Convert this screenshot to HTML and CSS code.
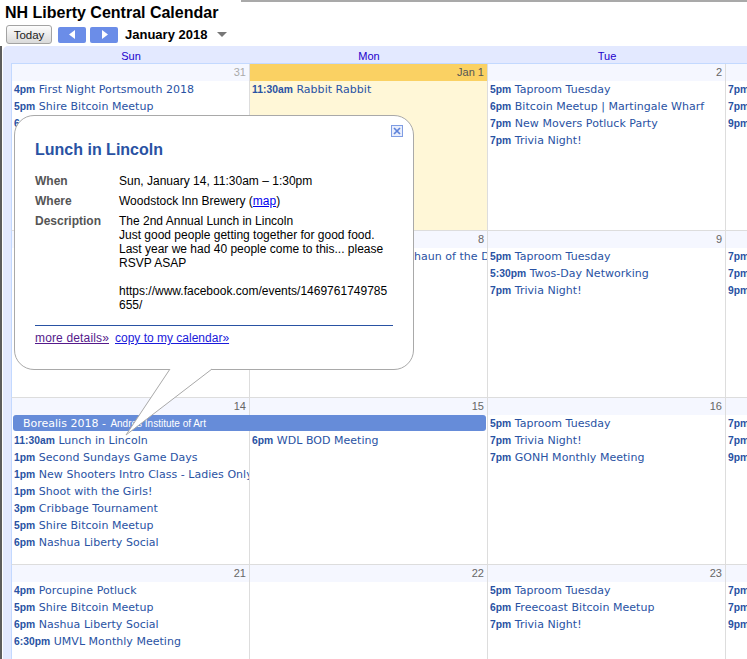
FILE: index.html
```html
<!DOCTYPE html>
<html>
<head>
<meta charset="utf-8">
<title>NH Liberty Central Calendar</title>
<link rel="stylesheet" href="styles.css">
</head>
<body>
<div class="page">
  <header class="titlebar">
    <h1 class="title">NH Liberty Central Calendar</h1>
    <div class="topline"></div>
  </header>
  <div class="toolbar">
    <button class="btn-today">Today</button>
    <button class="btn-nav"><svg width="7" height="9" viewBox="0 0 7 9"><path d="M6 0L0 4.5L6 9Z" fill="#fff"/></svg></button>
    <button class="btn-nav btn-next"><svg width="7" height="9" viewBox="0 0 7 9"><path d="M1 0L7 4.5L1 9Z" fill="#fff"/></svg></button>
    <span class="month">January 2018</span>
    <svg class="dropdown" width="10" height="5" viewBox="0 0 10 5"><path d="M0 0H10L5 5Z" fill="#777"/></svg>
  </div>

  <div class="calwrap">
    <div class="cal">
      <div class="dayhead">
        <div>Sun</div><div>Mon</div><div>Tue</div><div>Wed</div>
      </div>

      <!-- Week 1 -->
      <div class="week">
        <div class="num c1 other">31</div>
        <div class="num c2 today">Jan 1</div>
        <div class="num c3">2</div>
        <div class="num c4">3</div>
        <div class="cell c1">
          <div class="ev"><b>4pm</b> First Night Portsmouth 2018</div>
          <div class="ev"><b>5pm</b> Shire Bitcoin Meetup</div>
          <div class="ev"><b>6pm</b> Nashua Liberty Social</div>
        </div>
        <div class="cell c2 today">
          <div class="ev"><b>11:30am</b> Rabbit Rabbit</div>
        </div>
        <div class="cell c3">
          <div class="ev"><b>5pm</b> Taproom Tuesday</div>
          <div class="ev"><b>6pm</b> Bitcoin Meetup | Martingale Wharf</div>
          <div class="ev"><b>7pm</b> New Movers Potluck Party</div>
          <div class="ev"><b>7pm</b> Trivia Night!</div>
        </div>
        <div class="cell c4">
          <div class="ev"><b>7pm</b> Manchester Liberty Forum</div>
          <div class="ev"><b>7pm</b> Free State Meetup</div>
          <div class="ev"><b>9pm</b> Late Night Liberty Chat</div>
        </div>
      </div>

      <!-- Week 2 -->
      <div class="week">
        <div class="num c1">7</div>
        <div class="num c2">8</div>
        <div class="num c3">9</div>
        <div class="num c4">10</div>
        <div class="cell c1">
          <div class="ev"><b>1pm</b> Porcupine Brunch</div>
          <div class="ev"><b>5pm</b> Shire Bitcoin Meetup</div>
          <div class="ev"><b>6pm</b> Nashua Liberty Social</div>
        </div>
        <div class="cell c2">
          <div class="ev"><b>6:30pm</b> Liberty Movie Night: Shaun of the Dead</div>
        </div>
        <div class="cell c3">
          <div class="ev"><b>5pm</b> Taproom Tuesday</div>
          <div class="ev"><b>5:30pm</b> Twos-Day Networking</div>
          <div class="ev"><b>7pm</b> Trivia Night!</div>
        </div>
        <div class="cell c4">
          <div class="ev"><b>7pm</b> Manchester Liberty Forum</div>
          <div class="ev"><b>7pm</b> Free State Meetup</div>
          <div class="ev"><b>9pm</b> Late Night Liberty Chat</div>
        </div>
      </div>

      <!-- Week 3 -->
      <div class="week">
        <div class="num c1">14</div>
        <div class="num c2">15</div>
        <div class="num c3">16</div>
        <div class="num c4">17</div>
        <div class="cell c1 under-bar">
          <div class="ev"><b>11:30am</b> Lunch in Lincoln</div>
          <div class="ev"><b>1pm</b> Second Sundays Game Days</div>
          <div class="ev"><b>1pm</b> New Shooters Intro Class - Ladies Only</div>
          <div class="ev"><b>1pm</b> Shoot with the Girls!</div>
          <div class="ev"><b>3pm</b> Cribbage Tournament</div>
          <div class="ev"><b>5pm</b> Shire Bitcoin Meetup</div>
          <div class="ev"><b>6pm</b> Nashua Liberty Social</div>
        </div>
        <div class="cell c2 under-bar">
          <div class="ev"><b>6pm</b> WDL BOD Meeting</div>
        </div>
        <div class="cell c3">
          <div class="ev"><b>5pm</b> Taproom Tuesday</div>
          <div class="ev"><b>7pm</b> Trivia Night!</div>
          <div class="ev"><b>7pm</b> GONH Monthly Meeting</div>
        </div>
        <div class="cell c4">
          <div class="ev"><b>7pm</b> Manchester Liberty Forum</div>
          <div class="ev"><b>7pm</b> Free State Meetup</div>
          <div class="ev"><b>9pm</b> Late Night Liberty Chat</div>
        </div>
        <div class="bar">Borealis 2018 - <span class="loc">Andres Institute of Art</span></div>
      </div>

      <!-- Week 4 -->
      <div class="week">
        <div class="num c1">21</div>
        <div class="num c2">22</div>
        <div class="num c3">23</div>
        <div class="num c4">24</div>
        <div class="cell c1">
          <div class="ev"><b>4pm</b> Porcupine Potluck</div>
          <div class="ev"><b>5pm</b> Shire Bitcoin Meetup</div>
          <div class="ev"><b>6pm</b> Nashua Liberty Social</div>
          <div class="ev"><b>6:30pm</b> UMVL Monthly Meeting</div>
        </div>
        <div class="cell c2"></div>
        <div class="cell c3">
          <div class="ev"><b>5pm</b> Taproom Tuesday</div>
          <div class="ev"><b>6pm</b> Freecoast Bitcoin Meetup</div>
          <div class="ev"><b>7pm</b> Trivia Night!</div>
        </div>
        <div class="cell c4">
          <div class="ev"><b>7pm</b> Manchester Liberty Forum</div>
          <div class="ev"><b>7pm</b> Free State Meetup</div>
          <div class="ev"><b>9pm</b> Late Night Liberty Chat</div>
        </div>
      </div>
    </div>
  </div>

  <div class="bubble">
    <svg class="b-close" width="12" height="12" viewBox="0 0 12 12"><rect x="0.5" y="0.5" width="11" height="11" fill="#e9eefc" stroke="#7f9de3"/><path d="M3 3L9 9M9 3L3 9" stroke="#5f83d9" stroke-width="1.7"/></svg>
    <h2 class="b-title">Lunch in Lincoln</h2>
    <div class="b-details">
      <div class="b-label">When</div>
      <div class="b-value">Sun, January 14, 11:30am – 1:30pm</div>
      <div class="b-label">Where</div>
      <div class="b-value">Woodstock Inn Brewery (<a class="maplink" href="#">map</a>)</div>
      <div class="b-label">Description</div>
      <div class="b-value">The 2nd Annual Lunch in Lincoln<br>Just good people getting together for good food.<br>Last year we had 40 people come to this... please RSVP ASAP<br><br><span class="url">https://www.facebook.com/events/1469761749785655/</span></div>
    </div>
    <div class="b-sep"></div>
    <div class="b-links"><a class="visited" href="#">more details»</a><a class="copy" href="#">copy to my calendar»</a></div>
  </div>
  <svg class="tail" width="100" height="75" viewBox="0 0 100 75">
    <path d="M50 0H92V4L6 70L50 4Z" fill="#fff"/>
    <path d="M50 4L6 70M92 4L6 70" stroke="#a9a9a9" stroke-width="1" fill="none"/>
  </svg>
</div>
</body>
</html>
```
FILE: styles.css
```css
* { box-sizing: border-box; }
html, body { margin: 0; padding: 0; }
body {
  width: 747px;
  height: 659px;
  overflow: hidden;
  background: #fff;
  font-family: "Liberation Sans", Arial, sans-serif;
}
.page {
  position: relative;
  width: 747px;
  height: 659px;
  overflow: hidden;
}

/* Title */
.titlebar {
  display: flex;
  align-items: flex-start;
  height: 22px;
}
.title {
  margin: 4px 0 0 5px;
  font-size: 16px;
  line-height: 18px;
  font-weight: bold;
  white-space: nowrap;
  color: #000;
}
.topline {
  flex: 1;
  margin-left: 23px;
  border-top: 2px solid #a9a9a9;
}

/* Toolbar */
.toolbar {
  display: flex;
  align-items: center;
  height: 19px;
  margin: 3px 0 0 6px;
}
.btn-today {
  width: 46px;
  height: 19px;
  padding: 0;
  border: 1px solid #a3a3a3;
  border-radius: 3px;
  background: linear-gradient(#fdfdfd, #dadada);
  font-family: "Liberation Sans", Arial, sans-serif;
  font-size: 11.5px;
  color: #222;
}
.btn-nav {
  width: 28px;
  height: 16px;
  margin-left: 6px;
  padding: 0;
  border: 0;
  border-radius: 2px;
  background: #6b8de8;
  display: flex;
  align-items: center;
  justify-content: center;
}
.btn-nav svg { display: block; }
.btn-next { margin-left: 4px; }
.month {
  margin-left: 7px;
  font-size: 13px;
  font-weight: bold;
  color: #000;
}
.dropdown {
  margin-left: 10px;
  display: block;
}

/* Calendar */
.calwrap {
  margin-top: 2px;
  height: 613px;
  border-left: 2px solid #5d5d5d;
  padding-left: 1px;
}
.cal {
  height: 100%;
  background: #e3e9ff;
  border-top-left-radius: 5px;
  padding-left: 8px;
  overflow: hidden;
}
.dayhead {
  display: grid;
  grid-template-columns: repeat(4, 238px);
  height: 18px;
  padding-left: 1px;
  border-bottom: 1px solid #c3d9ff;
}
.dayhead div {
  text-align: center;
  color: #2200cc;
  font-size: 11px;
  line-height: 13px;
  padding-top: 4px;
}
.week {
  display: grid;
  grid-template-columns: repeat(4, 238px);
  grid-template-rows: 17px 149px;
  border-left: 1px solid #c3d9ff;
  border-bottom: 1px solid #dddddd;
}
.c1 { grid-column: 1; }
.c2 { grid-column: 2; }
.c3 { grid-column: 3; }
.c4 { grid-column: 4; }
.num {
  grid-row: 1;
  border-right: 1px solid #dddddd;
  background: #f5f7ff;
  text-align: right;
  padding-right: 3px;
  font-size: 11px;
  line-height: 17px;
  color: #666;
}
.num.other { color: #aaa; }
.num.today { background: #fad163; color: #555; }
.cell {
  grid-row: 2;
  border-right: 1px solid #dddddd;
  background: #fff;
  overflow: hidden;
}
.cell.today { background: #fff7d7; }
.cell.under-bar { padding-top: 17px; }
.bar {
  grid-row: 2;
  grid-column: 1 / 3;
  align-self: start;
  z-index: 1;
  height: 16px;
  margin: 0 2px 0 1px;
  background: #668cd9;
  border-radius: 3px;
  color: #fff;
  font-family: "DejaVu Sans", sans-serif;
  font-size: 11px;
  line-height: 17px;
  padding-left: 10px;
  white-space: nowrap;
  overflow: hidden;
}
.bar .loc {
  font-family: "Liberation Sans", Arial, sans-serif;
  font-size: 10px;
  margin-left: 1px;
}
.ev {
  height: 17px;
  line-height: 18px;
  padding-left: 2px;
  white-space: nowrap;
  overflow: hidden;
  color: #2952a3;
  font-family: "DejaVu Sans", sans-serif;
  font-size: 11px;
  letter-spacing: 0.03px;
}
.ev b {
  font-family: "Liberation Sans", Arial, sans-serif;
  font-size: 10.3px;
  font-weight: bold;
}

/* Popup bubble */
.bubble {
  position: absolute;
  left: 14px;
  top: 115px;
  width: 400px;
  height: 255px;
  border: 1px solid #a9a9a9;
  border-radius: 20px;
  background: #fff;
  padding: 23px 20px 0 20px;
  font-size: 12px;
  color: #000;
  z-index: 5;
}
.b-close {
  position: absolute;
  top: 9px;
  right: 10px;
  display: block;
}
.b-title {
  margin: 0;
  font-size: 16px;
  line-height: 21px;
  font-weight: bold;
  color: #2952a3;
}
.b-details {
  display: grid;
  grid-template-columns: 84px 274px;
  margin-top: 11px;
  line-height: 14px;
}
.b-label {
  padding: 3px 0;
  font-weight: bold;
  color: #555;
}
.b-value {
  padding: 3px 0;
  color: #000;
}
.maplink { color: #0000ee; }
.url { word-break: break-all; }
.b-sep {
  height: 1px;
  margin-top: 10px;
  background: #2952a3;
}
.b-links {
  margin-top: 5px;
  line-height: 14px;
}
.b-links a { text-decoration: underline; }
.b-links .visited { color: #551a8b; letter-spacing: 0.15px; }
.b-links .copy { color: #1a1adb; margin-left: 6px; }
.tail {
  position: absolute;
  left: 120px;
  top: 365px;
  z-index: 6;
  display: block;
}
```
